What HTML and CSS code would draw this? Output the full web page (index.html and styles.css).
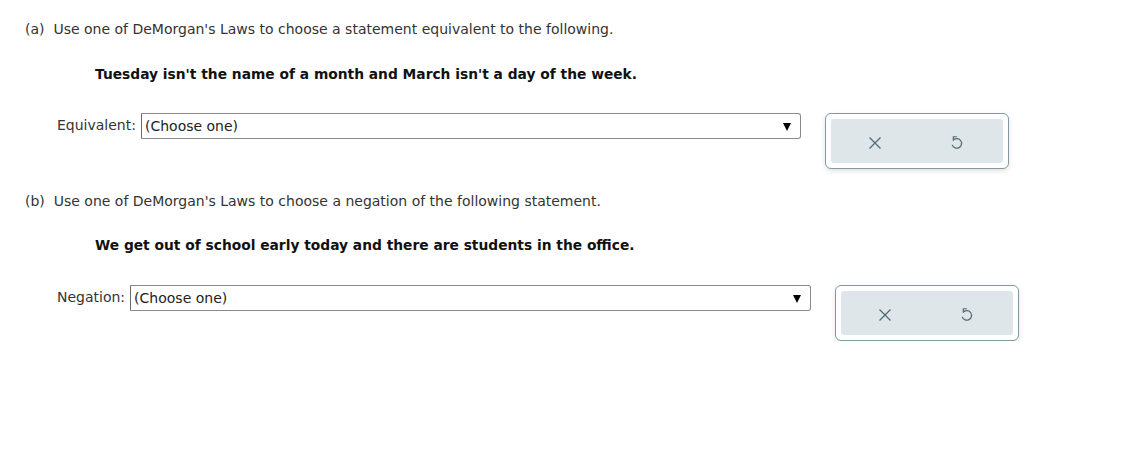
FILE: index.html
```html
<!DOCTYPE html>
<html>
<head>
<meta charset="utf-8">
<link rel="stylesheet" href="styles.css">
</head>
<body>
<div class="page">
  <div class="part">
    <p class="prompt">(a)&nbsp; Use one of DeMorgan's Laws to choose a statement equivalent to the following.</p>
    <p class="statement">Tuesday isn't the name of a month and March isn't a day of the week.</p>
    <div class="answer">
      <span class="label">Equivalent:</span>
      <div class="select select-a">
        <span>(Choose one)</span>
        <svg class="caret" width="8" height="9" viewBox="0 0 8 9"><path d="M0 1h8L4 9z" fill="#000"/></svg>
      </div>
      <div class="tools">
        <div class="tools-inner">
          <svg class="icon" width="14" height="14" viewBox="0 0 14 14"><path d="M1.5 1.5L12.5 12.5M12.5 1.5L1.5 12.5" stroke="#4e6b78" stroke-width="1.3" fill="none"/></svg>
          <svg class="icon" width="15" height="17" viewBox="0 0 14 16"><path d="M4.4 5.4A4.5 4.5 0 1 1 3.1 10.6" stroke="#4e6b78" stroke-width="1.15" fill="none" stroke-linecap="round"/><path d="M7 2.6H4V5.8" stroke="#4e6b78" stroke-width="1.15" fill="none" stroke-linecap="round" stroke-linejoin="round"/></svg>
        </div>
      </div>
    </div>
  </div>
  <div class="part part-b">
    <p class="prompt">(b)&nbsp; Use one of DeMorgan's Laws to choose a negation of the following statement.</p>
    <p class="statement">We get out of school early today and there are students in the office.</p>
    <div class="answer">
      <span class="label">Negation:</span>
      <div class="select select-b">
        <span>(Choose one)</span>
        <svg class="caret" width="8" height="9" viewBox="0 0 8 9"><path d="M0 1h8L4 9z" fill="#000"/></svg>
      </div>
      <div class="tools">
        <div class="tools-inner">
          <svg class="icon" width="14" height="14" viewBox="0 0 14 14"><path d="M1.5 1.5L12.5 12.5M12.5 1.5L1.5 12.5" stroke="#4e6b78" stroke-width="1.3" fill="none"/></svg>
          <svg class="icon" width="15" height="17" viewBox="0 0 14 16"><path d="M4.4 5.4A4.5 4.5 0 1 1 3.1 10.6" stroke="#4e6b78" stroke-width="1.15" fill="none" stroke-linecap="round"/><path d="M7 2.6H4V5.8" stroke="#4e6b78" stroke-width="1.15" fill="none" stroke-linecap="round" stroke-linejoin="round"/></svg>
        </div>
      </div>
    </div>
  </div>
</div>
</body>
</html>
```

FILE: styles.css
```css
html, body {
  margin: 0;
  padding: 0;
  background: #fff;
}
body {
  font-family: "DejaVu Sans", Verdana, sans-serif;
  font-size: 14px;
  line-height: 16px;
  color: #000;
}
.page {
  padding: 21px 0 0 25px;
}
.prompt {
  margin: 0;
  color: #333;
}
.statement {
  margin: 29px 0 0 70px;
  font-weight: bold;
  font-size: 13.8px;
  color: #111;
}
.answer {
  margin: 31px 0 0 32px;
  display: flex;
  align-items: flex-start;
  height: 56px;
}
.part-b {
  margin-top: 24px;
}
.part-b .statement {
  margin-top: 28px;
}
.part-b .answer {
  margin-top: 32px;
}
.label {
  margin-top: 4px;
  margin-right: 5px;
  color: #333;
}
.select {
  box-sizing: border-box;
  height: 26px;
  border: 1px solid #8a8a8a;
  border-left-color: #6a6a6a;
  border-radius: 0 3px 3px 0;
  display: flex;
  align-items: center;
  justify-content: space-between;
  padding: 0 9px 1px 3px;
  color: #222;
}
.select-a { width: 660px; }
.select-b { width: 681px; }
.caret {
  margin-top: 1px;
}
.tools {
  box-sizing: border-box;
  margin-left: 24px;
  width: 184px;
  height: 56px;
  border: 1px solid #7f9aa5;
  border-radius: 6px;
  padding: 5px;
  box-shadow: 0 2px 5px rgba(0, 0, 0, 0.12);
  background: #fff;
}
.tools-inner {
  height: 100%;
  background: #dfe6e9;
  border-radius: 3px;
  display: flex;
  align-items: center;
  justify-content: space-between;
  padding: 3px 39px 0 37px;
  box-sizing: border-box;
}
.icon {
  display: block;
}
```
